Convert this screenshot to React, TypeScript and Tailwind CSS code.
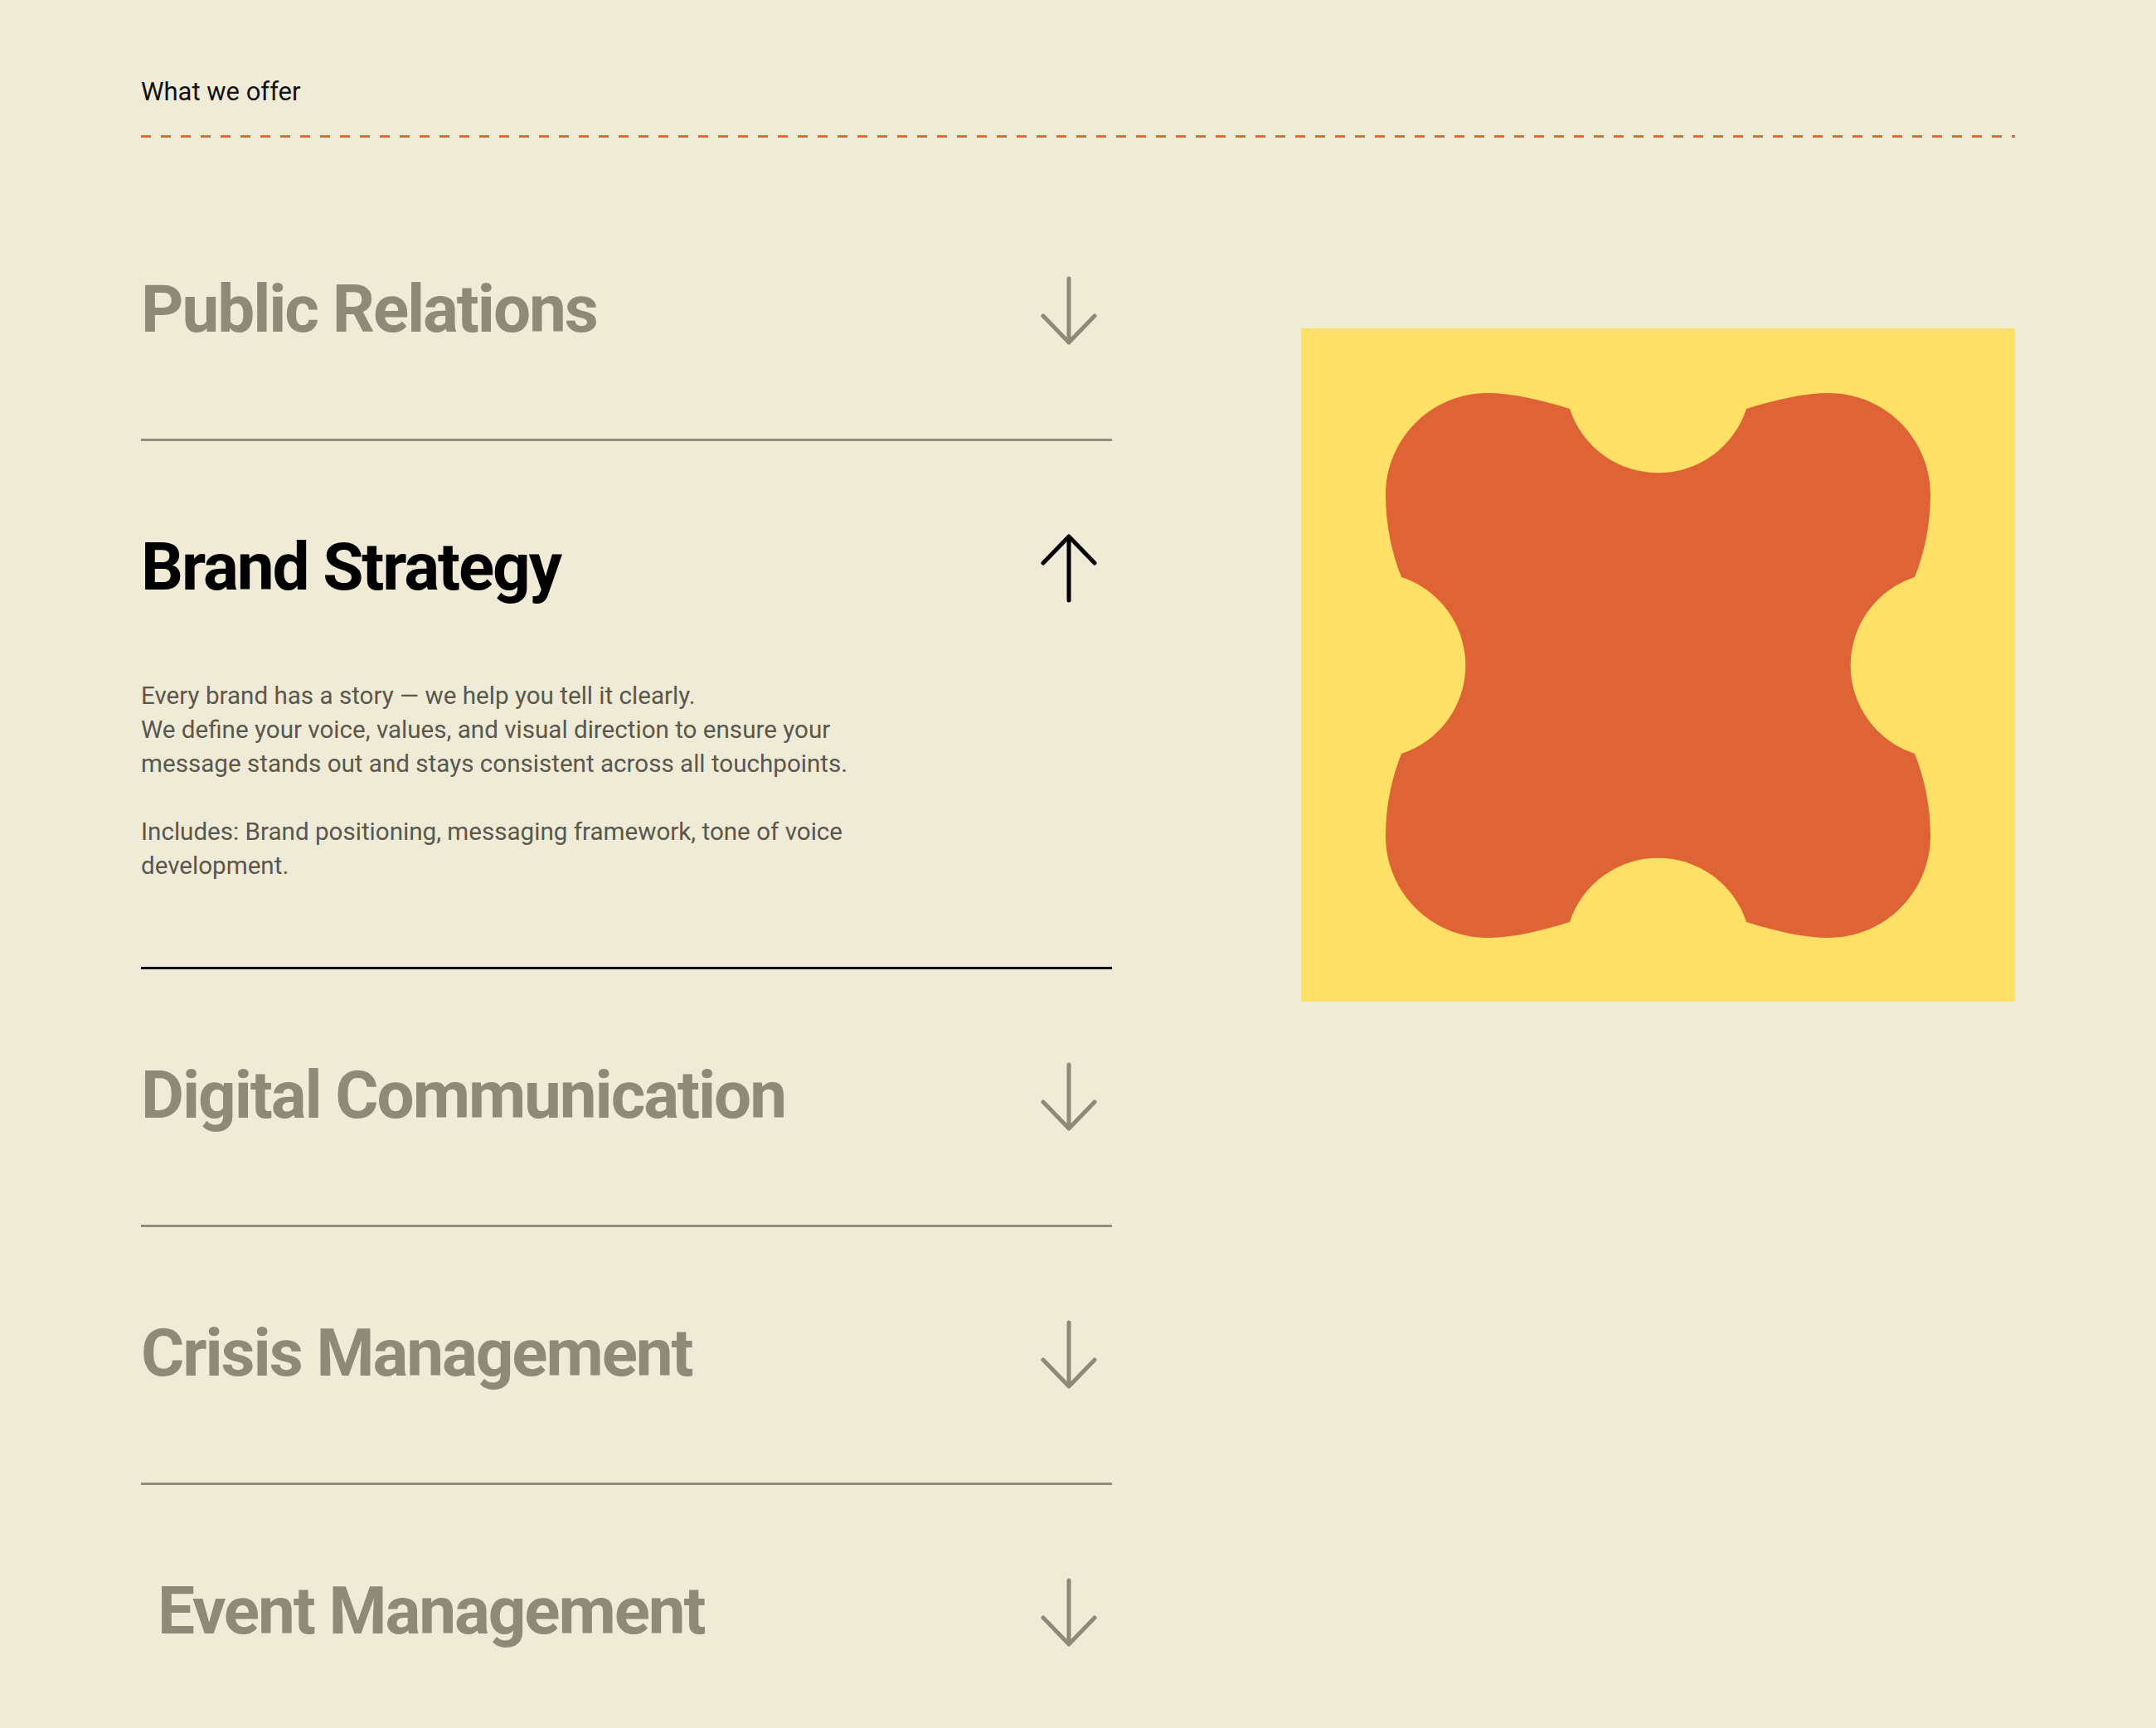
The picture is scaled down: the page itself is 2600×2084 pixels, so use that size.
import React from 'react';

interface Service {
  title: string;
  indent?: boolean;
}

const services: Service[] = [
  { title: 'Public Relations' },
  { title: 'Brand Strategy' },
  { title: 'Digital Communication' },
  { title: 'Crisis Management' },
  { title: 'Event Management', indent: true },
];

const OPEN_INDEX = 1;

function Arrow({ up }: { up: boolean }) {
  return (
    <svg
      width="104"
      height="104"
      viewBox="0 0 104 104"
      fill="none"
      stroke="currentColor"
      strokeWidth="5"
      strokeLinecap="round"
      strokeLinejoin="round"
      className={up ? 'shrink-0 text-black' : 'shrink-0 text-[#8e8a7a]'}
    >
      {up ? (
        <path d="M52 92V15M21 47L52 15L83 47" />
      ) : (
        <path d="M52 15V92M21 60L52 92L83 60" />
      )}
    </svg>
  );
}

function ServiceRow({ service, open }: { service: Service; open: boolean }) {
  return (
    <div
      className={
        open
          ? 'border-b-[3px] border-black pt-[100px] pb-[101px]'
          : 'border-b-[3px] border-[#8f8c7d] pt-[100px] pb-[104px]'
      }
    >
      <div className="flex h-[104px] items-center justify-between">
        <h3
          className={
            open
              ? 'text-[80px] leading-[96px] font-bold tracking-[-0.026em] text-black'
              : service.indent
                ? 'pl-[20px] text-[80px] leading-[96px] font-bold tracking-[-0.026em] text-[#8e8a7a]'
                : 'text-[80px] leading-[96px] font-bold tracking-[-0.026em] text-[#8e8a7a]'
          }
        >
          {service.title}
        </h3>
        <Arrow up={open} />
      </div>

      {/* Expanded content */}
      {open && (
        <div className="mt-[83px] max-w-[940px] text-[29.6px] leading-[41px] text-[#5a574c]">
          <p>
            Every brand has a story — we help you tell it clearly.
            <br />
            We define your voice, values, and visual direction to ensure your
            <br />
            message stands out and stays consistent across all touchpoints.
          </p>
          <p className="mt-[41px]">
            Includes: Brand positioning, messaging framework, tone of voice
            <br />
            development.
          </p>
        </div>
      )}
    </div>
  );
}

function BlobArt() {
  return (
    <div className="flex h-[812px] w-[861px] shrink-0 items-center justify-center bg-[#ffe066]">
      <svg width="657" height="657" viewBox="0 0 657 657">
        <path
          fill="#df6435"
          d="M222 19
             A112 112 0 0 0 435 19
             C470 8 505 0 534 0
             C602 0 657 55 657 123
             C657 160 649 195 638 222
             A112 112 0 0 0 638 435
             C649 462 657 497 657 534
             C657 602 602 657 534 657
             C505 657 470 649 435 638
             A112 112 0 0 0 222 638
             C187 649 152 657 123 657
             C55 657 0 602 0 534
             C0 497 8 462 19 435
             A112 112 0 0 0 19 222
             C8 195 0 160 0 123
             C0 55 55 0 123 0
             C152 0 187 8 222 19Z"
        />
      </svg>
    </div>
  );
}

export default function App() {
  return (
    <div className="h-[2084px] overflow-hidden bg-[#efebd6] font-['Roboto',sans-serif]">
      <div className="px-[170px] pt-[91px]">
        <p className="text-[31px] leading-[40px] text-[#111]">What we offer</p>
        <div className="mt-[32px] h-[3px] bg-[repeating-linear-gradient(to_right,#dd6a3b_0_12px,transparent_12px_24px)]" />

        <div className="mt-[55px] flex items-start justify-between">
          <div className="w-[1171px]">
            {services.map((s, i) => (
              <ServiceRow key={s.title} service={s} open={i === OPEN_INDEX} />
            ))}
          </div>

          <div className="mt-[175px]">
            <BlobArt />
          </div>
        </div>
      </div>
    </div>
  );
}
